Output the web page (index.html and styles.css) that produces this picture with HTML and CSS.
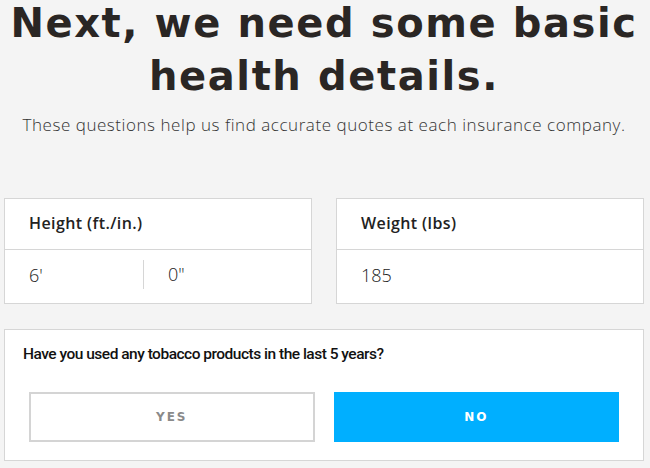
FILE: index.html
```html
<!DOCTYPE html>
<html lang="en">
<head>
    <meta charset="UTF-8">
    <meta name="viewport" content="width=device-width, initial-scale=1.0">
    <title>Health Details - Quote</title>
    <link rel="stylesheet" href="styles.css">
</head>
<body>
    <div class="container">
        <header class="intro">
            <h1>Next, we need some basic health details.</h1>
            <p>These questions help us find accurate quotes at each insurance company.</p>
        </header>

        <div class="field-row">
            <div class="field-card">
                <div class="field-label">Height (ft./in.)</div>
                <div class="field-inputs split">
                    <div class="field-value feet">6'</div>
                    <div class="field-value">0"</div>
                </div>
            </div>
            <div class="field-card">
                <div class="field-label">Weight (lbs)</div>
                <div class="field-inputs">
                    <div class="field-value">185</div>
                </div>
            </div>
        </div>

        <div class="question-card">
            <div class="question">Have you used any tobacco products in the last 5 years?</div>
            <div class="choices">
                <button class="choice">YES</button>
                <button class="choice active">NO</button>
            </div>
        </div>
    </div>
</body>
</html>
```

FILE: styles.css
```css
/* Reset and base styles */
* {
    margin: 0;
    padding: 0;
    box-sizing: border-box;
}

body {
    font-family: 'Open Sans', 'Liberation Sans', sans-serif;
    color: #2a2624;
    background: #f4f4f4;
}

/* Layout */
.container {
    width: 640px;
    margin: 0 0 0 4px;
}

/* Intro */
.intro {
    text-align: center;
}

.intro h1 {
    font-family: 'DejaVu Sans', 'Liberation Sans', sans-serif;
    font-weight: 700;
    font-size: 40px;
    line-height: 53px;
    letter-spacing: 1.6px;
    color: #2a2624;
    margin-top: -3px;
}

.intro p {
    margin-top: 10px;
    font-size: 17px;
    font-weight: 300;
    letter-spacing: 0.55px;
    color: #333;
}

/* Height / weight cards */
.field-row {
    display: grid;
    grid-template-columns: 1fr 1fr;
    gap: 24px;
    margin-top: 62px;
}

.field-card {
    background: #fff;
    border: 1px solid #d6d6d6;
}

.field-label {
    height: 51px;
    padding: 0 24px 3px;
    display: flex;
    align-items: center;
    font-weight: 600;
    font-size: 16px;
    letter-spacing: 0.4px;
    color: #222;
    border-bottom: 1px solid #d6d6d6;
}

.field-inputs {
    height: 53px;
    display: flex;
    align-items: center;
    padding-bottom: 4px;
}

.field-inputs .field-value {
    flex: 1;
    padding: 0 24px;
    font-size: 18px;
    font-weight: 300;
    color: #222;
}

.split .feet {
    flex: 0 0 138px;
}

.split .field-value + .field-value {
    border-left: 1px solid #d6d6d6;
    line-height: 29px;
}

/* Tobacco question */
.question-card {
    margin-top: 25px;
    background: #fff;
    border: 1px solid #d6d6d6;
    padding: 12px 24px 18px;
}

.question {
    margin-left: -6px;
    font-family: Roboto, sans-serif;
    font-weight: 500;
    font-size: 15.5px;
    line-height: 24px;
    letter-spacing: -0.5px;
    color: #111;
}

.choices {
    display: grid;
    grid-template-columns: 1fr 1fr;
    gap: 19px;
    margin-top: 26px;
}

.choice {
    height: 50px;
    background: #fff;
    border: 2px solid #d4d4d4;
    font-family: 'DejaVu Sans', 'Liberation Sans', sans-serif;
    font-weight: 700;
    font-size: 12px;
    letter-spacing: 2px;
    color: #8a8a8a;
    cursor: pointer;
}

.choice.active {
    background: #00afff;
    border-color: #00afff;
    color: #fff;
}
```
